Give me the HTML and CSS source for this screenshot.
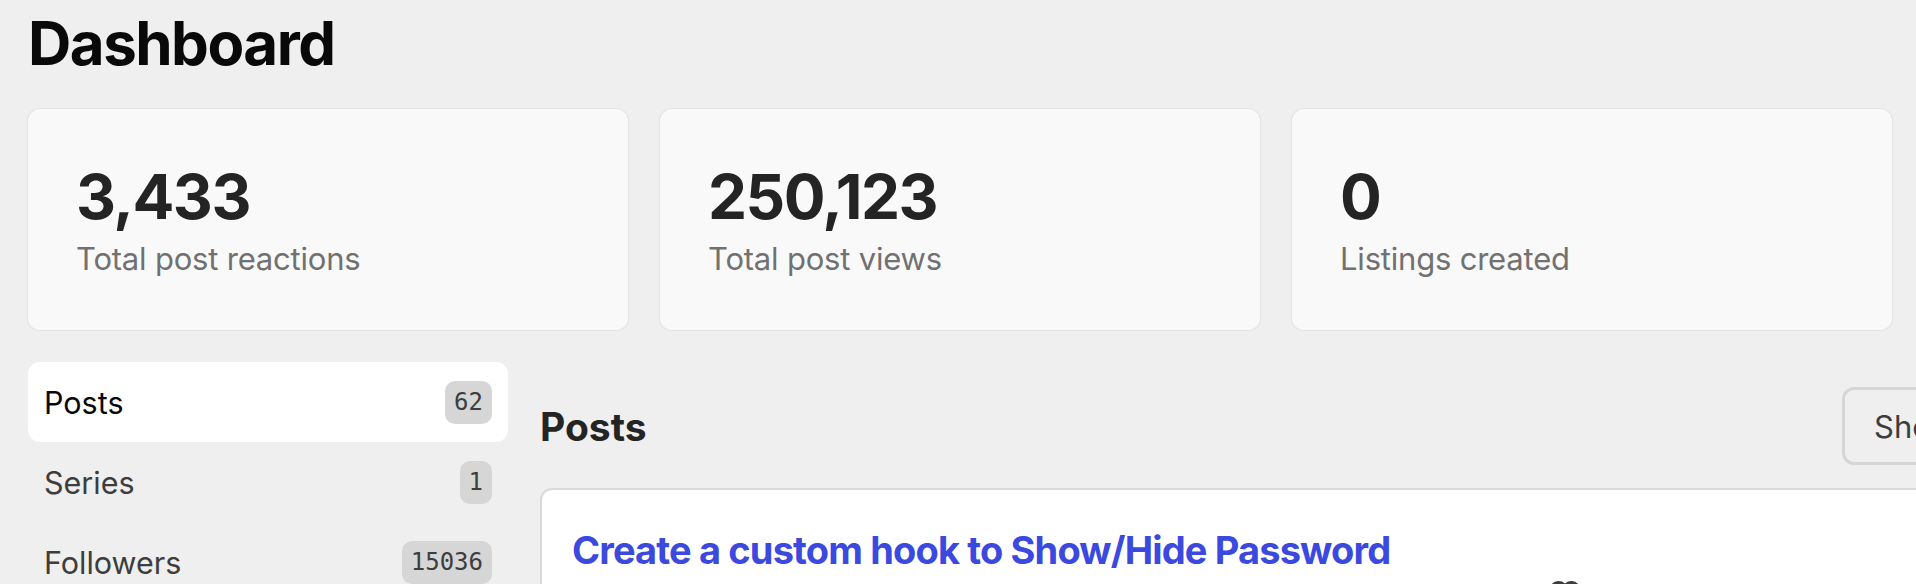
FILE: index.html
```html
<!DOCTYPE html>
<html lang="en">

<head>
  <meta charset="UTF-8">
  <meta name="viewport" content="width=device-width, initial-scale=1.0">
  <title>Dashboard</title>
  <link rel="stylesheet" href="styles.css">
</head>

<body>
  <div class="page">
    <h1 class="page-title">Dashboard</h1>

    <div class="stats">
      <div class="stat-card">
        <div class="stat-value">3,433</div>
        <div class="stat-label">Total post reactions</div>
      </div>
      <div class="stat-card">
        <div class="stat-value">250,123</div>
        <div class="stat-label">Total post views</div>
      </div>
      <div class="stat-card">
        <div class="stat-value">0</div>
        <div class="stat-label">Listings created</div>
      </div>
      <div class="stat-card">
        <div class="stat-value">0</div>
        <div class="stat-label">Credits available</div>
      </div>
    </div>

    <div class="layout">
      <nav class="sidebar">
        <a href="#" class="nav-item active">Posts <span class="count">62</span></a>
        <a href="#" class="nav-item">Series <span class="count">1</span></a>
        <a href="#" class="nav-item">Followers <span class="count">15036</span></a>
        <a href="#" class="nav-item">Following tags <span class="count">18</span></a>
      </nav>

      <main class="main">
        <div class="main-header">
          <h2>Posts</h2>
          <div class="filters">
            <button class="filter">Show: All posts</button>
            <button class="filter">Sort: Recently Created</button>
          </div>
        </div>

        <div class="post-list">
          <article class="post-card">
            <a href="#" class="post-title">Create a custom hook to Show/Hide Password</a>
            <div class="post-meta">Published: Jan 26</div>
            <div class="post-stat">
              <!-- reactions -->
              <svg width="48" height="48" viewBox="0 0 24 24" fill="#3d3d3d">
                <path d="M18.884 12.595l.01.011L12 19.5l-6.894-6.894.01-.01A4.875 4.875 0 0112 5.73a4.875 4.875 0 016.884 6.865zM6.431 7.037a3.375 3.375 0 000 4.773L12 17.38l5.569-5.569a3.375 3.375 0 10-4.773-4.773L9.613 10.22l-1.06-1.062 2.371-2.372a3.375 3.375 0 00-4.492.25v.001z"/>
              </svg>
              <span>146</span>
            </div>
            <div class="post-stat">12</div>
            <div class="post-stat">8,412</div>
            <div class="post-actions">Manage</div>
          </article>
        </div>
      </main>
    </div>
  </div>
</body>

</html>
```

FILE: styles.css
```css
html,
body {
  overflow: hidden;
}

body {
  margin: 0;
  background: #efefef;
  font-family: Inter, "Noto Sans", sans-serif;
  color: #242424;
}

.page {
  width: 2496px;
  padding: 0 28px;
}

.page-title {
  margin: 7px 0 30px 0;
  font-size: 60px;
  line-height: 72px;
  font-weight: 700;
  letter-spacing: -1.5px;
  color: #090909;
}

/* stat cards */
.stats {
  display: grid;
  grid-template-columns: repeat(4, 600px);
  gap: 32px;
}

.stat-card {
  background: #f9f9f9;
  border-radius: 12px;
  box-shadow: 0 0 0 1px #e2e2e2;
  padding: 49px 48px 48px 48px;
}

.stat-value {
  font-size: 62px;
  line-height: 1.25;
  font-weight: 700;
  letter-spacing: -1.5px;
  color: #242424;
}

.stat-label {
  font-size: 31px;
  line-height: 1.5;
  letter-spacing: -0.2px;
  color: #717171;
}

/* sidebar + main */
.layout {
  display: flex;
  gap: 32px;
  margin-top: 32px;
}

.sidebar {
  width: 480px;
  flex-shrink: 0;
}

.nav-item {
  display: flex;
  align-items: center;
  justify-content: space-between;
  height: 80px;
  padding: 0 16px;
  box-sizing: border-box;
  border-radius: 12px;
  font-size: 30.5px;
  color: #3d3d3d;
  text-decoration: none;
}

.nav-item.active {
  background: #fff;
  color: #090909;
}

.count {
  height: 43px;
  line-height: 43px;
  padding: 0 9px;
  border-radius: 10px;
  background: #d6d6d6;
  font-family: "DejaVu Sans Mono", monospace;
  font-size: 24px;
  color: #3d3d3d;
}

.main {
  flex: 1;
}

.main-header {
  display: flex;
  align-items: center;
  justify-content: space-between;
  margin: 25px 0 23px 0;
}

.main-header h2 {
  margin: 0;
  font-size: 39px;
  font-weight: 700;
  color: #242424;
}

.filters {
  display: flex;
  gap: 16px;
}

.filter {
  width: 333px;
  height: 78px;
  padding: 0 29px;
  border: 3px solid #d6d6d6;
  border-radius: 12px;
  background: #efefef;
  font-family: Inter, "Noto Sans", sans-serif;
  font-size: 31px;
  color: #3d3d3d;
  text-align: left;
}

/* post rows */
.post-card {
  display: grid;
  grid-template-columns: 969px repeat(3, 160px) 1fr;
  align-items: center;
  background: #fff;
  border: 2px solid #dadada;
  border-radius: 12px;
  padding: 32px 30px;
}

.post-title {
  grid-column: 1 / -1;
  font-size: 38px;
  line-height: 1.5;
  font-weight: 700;
  letter-spacing: -0.85px;
  color: #3b49df;
  text-decoration: none;
}

.post-meta {
  font-size: 26px;
  line-height: 30px;
  color: #717171;
}

.post-stat {
  display: flex;
  align-items: center;
  gap: 6px;
  height: 30px;
  font-size: 28px;
  color: #3d3d3d;
}

.post-actions {
  font-size: 28px;
  color: #3d3d3d;
  text-align: right;
}
```
